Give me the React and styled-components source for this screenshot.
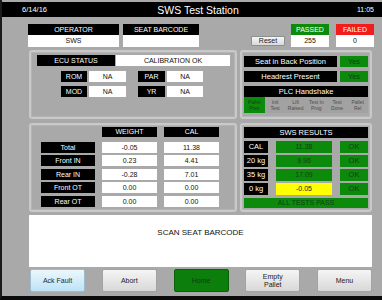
import React from "react";
import styled, { createGlobalStyle, css } from "styled-components";

const GlobalStyle = createGlobalStyle`
  body {
    margin: 0;
    background: #a9a9a9;
    font-family: "Liberation Sans", Arial, sans-serif;
  }
`;

const GREEN = "#0c8a0c";
const ON_GREEN = "#153f15";

const Screen = styled.div`
  width: 382px;
  height: 300px;
  box-sizing: border-box;
  background: #a9a9a9;
  border-left: 2px solid #1b1b1b;
  border-bottom: 4px solid #0b0b0b;
  padding-top: 2px;
  display: flex;
  flex-direction: column;
  overflow: hidden;
`;

const TopBar = styled.div`
  height: 15px;
  background: #000;
  color: #fff;
  display: grid;
  grid-template-columns: 1fr auto 1fr;
  align-items: center;
  padding: 0 8px 0 20px;
`;

const DateText = styled.span`
  font-size: 7.5px;
`;

const Title = styled.span`
  font-size: 10.5px;
`;

const Clock = styled.span`
  font-size: 7px;
  text-align: right;
`;

const Main = styled.div`
  margin-left: 27px;
  width: 343px;
  display: flex;
  flex-direction: column;
`;

const HeaderRow = styled.div`
  display: flex;
  align-items: flex-end;
  margin: 7px -2px 0 -1px;
  height: 23px;
`;

const Field = styled.div`
  width: ${(p) => p.w}px;
  margin-left: ${(p) => p.ml || 0}px;
  display: flex;
  flex-direction: column;
`;

const FieldLabel = styled.div`
  height: 11px;
  line-height: 11px;
  font-size: 7px;
  text-align: center;
  color: #fff;
  background: ${(p) => p.bg || "#000"};
`;

const FieldValue = styled.div`
  height: 12px;
  line-height: 12px;
  font-size: 7px;
  text-align: center;
  color: #111;
  background: #fff;
`;

const ResetButton = styled.button`
  margin-left: auto;
  margin-right: 6px;
  margin-bottom: 1px;
  width: 34px;
  height: 10px;
  padding: 0;
  font-family: inherit;
  font-size: 7px;
  line-height: 8px;
  color: #222;
  background: linear-gradient(#f6f6f6, #d9d9d9);
  border: 1px solid #8e8e8e;
  border-radius: 1px;
`;

const PanelGrid = styled.div`
  margin-top: 3px;
  display: grid;
  grid-template-columns: 208px 132px;
  grid-template-rows: 69px 89px;
  column-gap: 3px;
  row-gap: 4px;
`;

const Panel = styled.div`
  box-sizing: border-box;
  border: 2px solid #c9c9c9;
  border-radius: 3px;
  box-shadow: inset 0 0 0 1px #b4b4b4;
  padding: ${(p) => p.pad};
  display: flex;
  flex-direction: column;
`;

const Cell = styled.div`
  box-sizing: border-box;
  width: ${(p) => (p.w ? `${p.w}px` : "auto")};
  height: ${(p) => p.h || 11}px;
  line-height: ${(p) => p.h || 11}px;
  font-size: ${(p) => p.fs || 7}px;
  margin-top: ${(p) => p.mt || 0}px;
  margin-bottom: ${(p) => p.mb || 0}px;
  text-align: center;
  white-space: nowrap;
  ${(p) =>
    p.kind === "label" &&
    css`
      background: #000;
      color: #fff;
    `}
  ${(p) =>
    p.kind === "value" &&
    css`
      background: #fff;
      color: #111;
    `}
  ${(p) =>
    p.kind === "ok" &&
    css`
      background: ${GREEN};
      color: ${ON_GREEN};
    `}
  ${(p) =>
    p.kind === "warn" &&
    css`
      background: #ffff00;
      color: #222;
    `}
`;

const Row = styled.div`
  display: flex;
  gap: ${(p) => p.gap ?? 2}px;
  margin-left: ${(p) => p.ml || 0}px;
  margin-top: ${(p) => p.mt || 0}px;
`;

const Spacer = styled.div`
  width: ${(p) => p.w}px;
`;

const Handshake = styled.div`
  display: grid;
  grid-template-columns: repeat(6, 1fr);
  height: 16px;
  background: #a2a2a2;
`;

const HandshakeCell = styled.div`
  display: flex;
  align-items: center;
  justify-content: center;
  text-align: center;
  font-size: 5px;
  line-height: 6px;
  color: ${(p) => (p.on ? ON_GREEN : "#4d4d4d")};
  background: ${(p) => (p.on ? GREEN : "transparent")};
`;

const WeightGrid = styled.div`
  display: grid;
  grid-template-columns: 54px 55px 55px;
  grid-template-rows: 12px repeat(5, 11px);
  column-gap: 7px;
  row-gap: 2.5px;
  margin-left: 8px;
`;

const HeadCell = styled(Cell)`
  align-self: start;
  height: 10px;
  line-height: 10px;
`;

const ResultsCol = styled.div`
  display: flex;
  flex-direction: column;
  gap: 2px;
`;

const Message = styled.div`
  margin-top: 3px;
  height: 52px;
  background: #fff;
  box-sizing: border-box;
  padding-top: 13px;
  text-align: center;
  font-size: 8px;
  color: #111;
`;

const ButtonRow = styled.div`
  margin-top: 2px;
  display: flex;
  justify-content: space-between;
  padding-left: 1px;
`;

const tones = {
  blue: css`
    background: linear-gradient(#ecf7fd, #bde3f6);
    border: 1px solid #9dbccc;
    color: #1d2a33;
  `,
  gray: css`
    background: linear-gradient(#f5f5f5, #d8d8d8);
    border: 1px solid #a3a3a3;
    color: #222;
  `,
  green: css`
    background: #0b7e0b;
    border: 1px solid #0a5f0a;
    color: #163a16;
  `,
};

const NavButton = styled.button`
  box-sizing: border-box;
  width: 55px;
  height: 23px;
  padding: 0;
  font-family: inherit;
  font-size: 7px;
  line-height: 8px;
  border-radius: 2px;
  ${(p) => tones[p.tone || "gray"]}
`;

const ecuRows = [
  ["ROM", "NA", "PAR", "NA"],
  ["MOD", "NA", "YR", "NA"],
];

const handshake = [
  ["Pallet", "Pres", true],
  ["Init", "Test"],
  ["Lift", "Raised"],
  ["Test In", "Prog"],
  ["Test", "Done"],
  ["Pallet", "Rel"],
];

const weights = [
  ["Total", "-0.05", "11.38"],
  ["Front IN", "0.23", "4.41"],
  ["Rear IN", "-0.28", "7.01"],
  ["Front OT", "0.00", "0.00"],
  ["Rear OT", "0.00", "0.00"],
];

const results = [
  ["CAL", "11.38", false],
  ["20 kg", "9.96", false],
  ["35 kg", "17.09", false],
  ["0 kg", "-0.05", true],
];

export default function App() {
  return (
    <>
      <GlobalStyle />
      <Screen>
        <TopBar>
          <DateText>6/14/16</DateText>
          <Title>SWS Test Station</Title>
          <Clock>11:05</Clock>
        </TopBar>
        <Main>
          <HeaderRow>
            <Field w={91}>
              <FieldLabel>OPERATOR</FieldLabel>
              <FieldValue>SWS</FieldValue>
            </Field>
            <Field w={76} ml={4}>
              <FieldLabel>SEAT BARCODE</FieldLabel>
              <FieldValue></FieldValue>
            </Field>
            <ResetButton>Reset</ResetButton>
            <Field w={38}>
              <FieldLabel bg={GREEN}>PASSED</FieldLabel>
              <FieldValue>255</FieldValue>
            </Field>
            <Field w={38} ml={7}>
              <FieldLabel bg="#f21c1c">FAILED</FieldLabel>
              <FieldValue>0</FieldValue>
            </Field>
          </HeaderRow>

          <PanelGrid>
            <Panel pad="3px 4px 0 6px">
              <Row gap={1}>
                <Cell kind="label" w={78}>ECU STATUS</Cell>
                <Cell kind="value" w={114}>CALIBRATION OK</Cell>
              </Row>
              {ecuRows.map((r, i) => (
                <Row key={r[0]} ml={24} mt={i === 0 ? 5 : 4}>
                  <Cell kind="label" w={26}>{r[0]}</Cell>
                  <Cell kind="value" w={37}>{r[1]}</Cell>
                  <Spacer w={8} />
                  <Cell kind="label" w={27}>{r[2]}</Cell>
                  <Cell kind="value" w={36}>{r[3]}</Cell>
                </Row>
              ))}
            </Panel>

            <Panel pad="4px 2px 0 2px">
              <Row gap={3}>
                <Cell kind="label" w={93} fs={7.5}>Seat in Back Position</Cell>
                <Cell kind="ok" w={28} fs={7.5}>Yes</Cell>
              </Row>
              <Row gap={3} mt={4}>
                <Cell kind="label" w={93} fs={7.5}>Headrest Present</Cell>
                <Cell kind="ok" w={28} fs={7.5}>Yes</Cell>
              </Row>
              <Row mt={4}>
                <Cell kind="label" w={124} fs={7.5}>PLC Handshake</Cell>
              </Row>
              <Handshake>
                {handshake.map(([a, b, on]) => (
                  <HandshakeCell key={a + b} on={on}>
                    {a}
                    <br />
                    {b}
                  </HandshakeCell>
                ))}
              </Handshake>
            </Panel>

            <Panel pad="2px 0 0 2px">
              <WeightGrid>
                <div />
                <HeadCell kind="label">WEIGHT</HeadCell>
                <HeadCell kind="label">CAL</HeadCell>
                {weights.map(([name, w, c]) => (
                  <React.Fragment key={name}>
                    <Cell kind="label">{name}</Cell>
                    <Cell kind="value">{w}</Cell>
                    <Cell kind="value">{c}</Cell>
                  </React.Fragment>
                ))}
              </WeightGrid>
            </Panel>

            <Panel pad="2px 2px 0 2px">
              <ResultsCol>
                <Cell kind="label" w={124} fs={7.5} mb={1}>SWS RESULTS</Cell>
                {results.map(([name, v, warn]) => (
                  <Row key={name} gap={8}>
                    <Cell kind="label" w={24} h={12} fs={7.5}>{name}</Cell>
                    <Cell kind={warn ? "warn" : "ok"} w={56} h={12}>{v}</Cell>
                    <Cell kind="ok" w={28} h={12} fs={7.5}>OK</Cell>
                  </Row>
                ))}
                <Cell kind="ok" w={124} h={10} fs={7} mt={1}>
                  ALL TESTS PASS
                </Cell>
              </ResultsCol>
            </Panel>
          </PanelGrid>

          <Message>SCAN SEAT BARCODE</Message>

          <ButtonRow>
            <NavButton tone="blue">Ack Fault</NavButton>
            <NavButton>Abort</NavButton>
            <NavButton tone="green">Home</NavButton>
            <NavButton>
              Empty
              <br />
              Pallet
            </NavButton>
            <NavButton>Menu</NavButton>
          </ButtonRow>
        </Main>
      </Screen>
    </>
  );
}
